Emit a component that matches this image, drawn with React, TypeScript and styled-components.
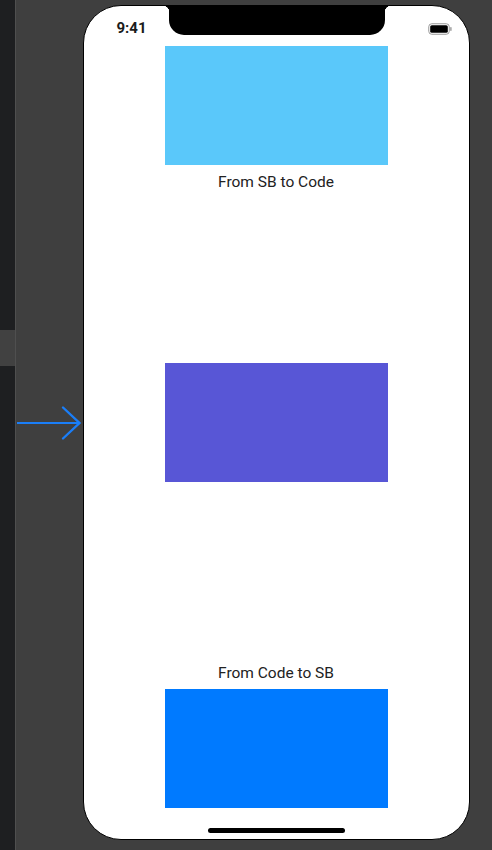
import React from "react";
import styled, { createGlobalStyle } from "styled-components";

const Global = createGlobalStyle`
  html, body { margin: 0; padding: 0; background: #3f3f3f; }
  body { font-family: Roboto, "Liberation Sans", sans-serif; }
  #root { width: 492px; height: 850px; overflow: hidden; }
`;

const Page = styled.div`
  display: flex;
  width: 492px;
  height: 850px;
  background: #3f3f3f;
`;

const Sidebar = styled.div`
  width: 15px;
  height: 100%;
  background: #1e1f21;
  border-right: 1.5px solid #4f4f4f;
  display: flex;
  flex-direction: column;
`;

const SideBlock = styled.div`
  margin-top: 330px;
  height: 36px;
  background: #414141;
`;

const Canvas = styled.div`
  flex: 1;
  display: flex;
  align-items: flex-start;
`;

const ArrowWrap = styled.div`
  width: 66.5px;
  height: 36px;
  margin-top: 405px;
  display: flex;
  align-items: center;
`;

const Phone = styled.div`
  position: relative;
  width: 385px;
  height: 833px;
  margin-top: 5px;
  border: 1.5px solid #000;
  border-radius: 38px;
  background: #fff;
  overflow: hidden;
  display: flex;
  flex-direction: column;
  align-items: center;
`;

const Notch = styled.div`
  position: absolute;
  top: 0;
  left: 85px;
  width: 216px;
  height: 29px;
  background: #000;
  border-radius: 0 0 15px 15px;
  &::before, &::after {
    content: "";
    position: absolute;
    top: 0;
    width: 6px;
    height: 6px;
  }
  &::before {
    left: -6px;
    background: radial-gradient(circle at 0 100%, transparent 6px, #000 6.5px);
  }
  &::after {
    right: -6px;
    background: radial-gradient(circle at 100% 100%, transparent 6px, #000 6.5px);
  }
`;

const StatusBar = styled.div`
  width: 100%;
  height: 40px;
  box-sizing: border-box;
  display: flex;
  justify-content: space-between;
  align-items: flex-start;
  padding: 13px 17px 0 33px;
`;

const Time = styled.span`
  font-family: Roboto, "Liberation Sans", sans-serif;
  font-weight: 700;
  font-size: 15px;
  line-height: 18px;
  color: #1b1b1b;
`;

const Battery = styled.svg`
  margin-top: 4px;
`;

const Block = styled.div<{ $color: string }>`
  width: 223px;
  height: 119px;
  background: ${(p) => p.$color};
  flex-shrink: 0;
`;

const Label = styled.div<{ $top: number; $bottom: number }>`
  margin-top: ${(p) => p.$top}px;
  margin-bottom: ${(p) => p.$bottom}px;
  font-family: Roboto, "Liberation Sans", sans-serif;
  font-size: 15.5px;
  line-height: 18px;
  color: #222;
`;

const Spacer = styled.div<{ $h: number }>`
  height: ${(p) => p.$h}px;
  flex-shrink: 0;
`;

const HomeBar = styled.div`
  margin-top: 20px;
  width: 137px;
  height: 5px;
  border-radius: 3px;
  background: #000;
`;

export default function App() {
  return (
    <Page>
      <Global />
      <Sidebar>
        <SideBlock />
      </Sidebar>
      <Canvas>
        <ArrowWrap>
          <svg width="66" height="36" viewBox="0 0 66 36">
            <path d="M1 18 H63" stroke="#1a7ef8" strokeWidth="2.2" fill="none" />
            <path d="M47 2.5 L63.5 18 L47 33.5" stroke="#1a7ef8" strokeWidth="2.4" fill="none" strokeLinecap="round" />
          </svg>
        </ArrowWrap>
        <Phone>
          <Notch />
          <StatusBar>
            <Time>9:41</Time>
            <Battery width="24" height="12" viewBox="0 0 24 12">
              <rect x="0.75" y="0.75" width="20.5" height="10.5" rx="3" fill="none" stroke="#999" strokeWidth="1" />
              <rect x="2.2" y="2.2" width="17.6" height="7.6" rx="1.6" fill="#000" />
              <rect x="22.2" y="4" width="1.4" height="4" rx="0.7" fill="#999" />
            </Battery>
          </StatusBar>
          <Block $color="#5ac8fa" />
          <Label $top={8} $bottom={0}>From SB to Code</Label>
          <Spacer $h={172} />
          <Block $color="#5856d6" />
          <Spacer $h={182} />
          <Label $top={0} $bottom={7}>From Code to SB</Label>
          <Block $color="#007aff" />
          <HomeBar />
        </Phone>
      </Canvas>
    </Page>
  );
}
